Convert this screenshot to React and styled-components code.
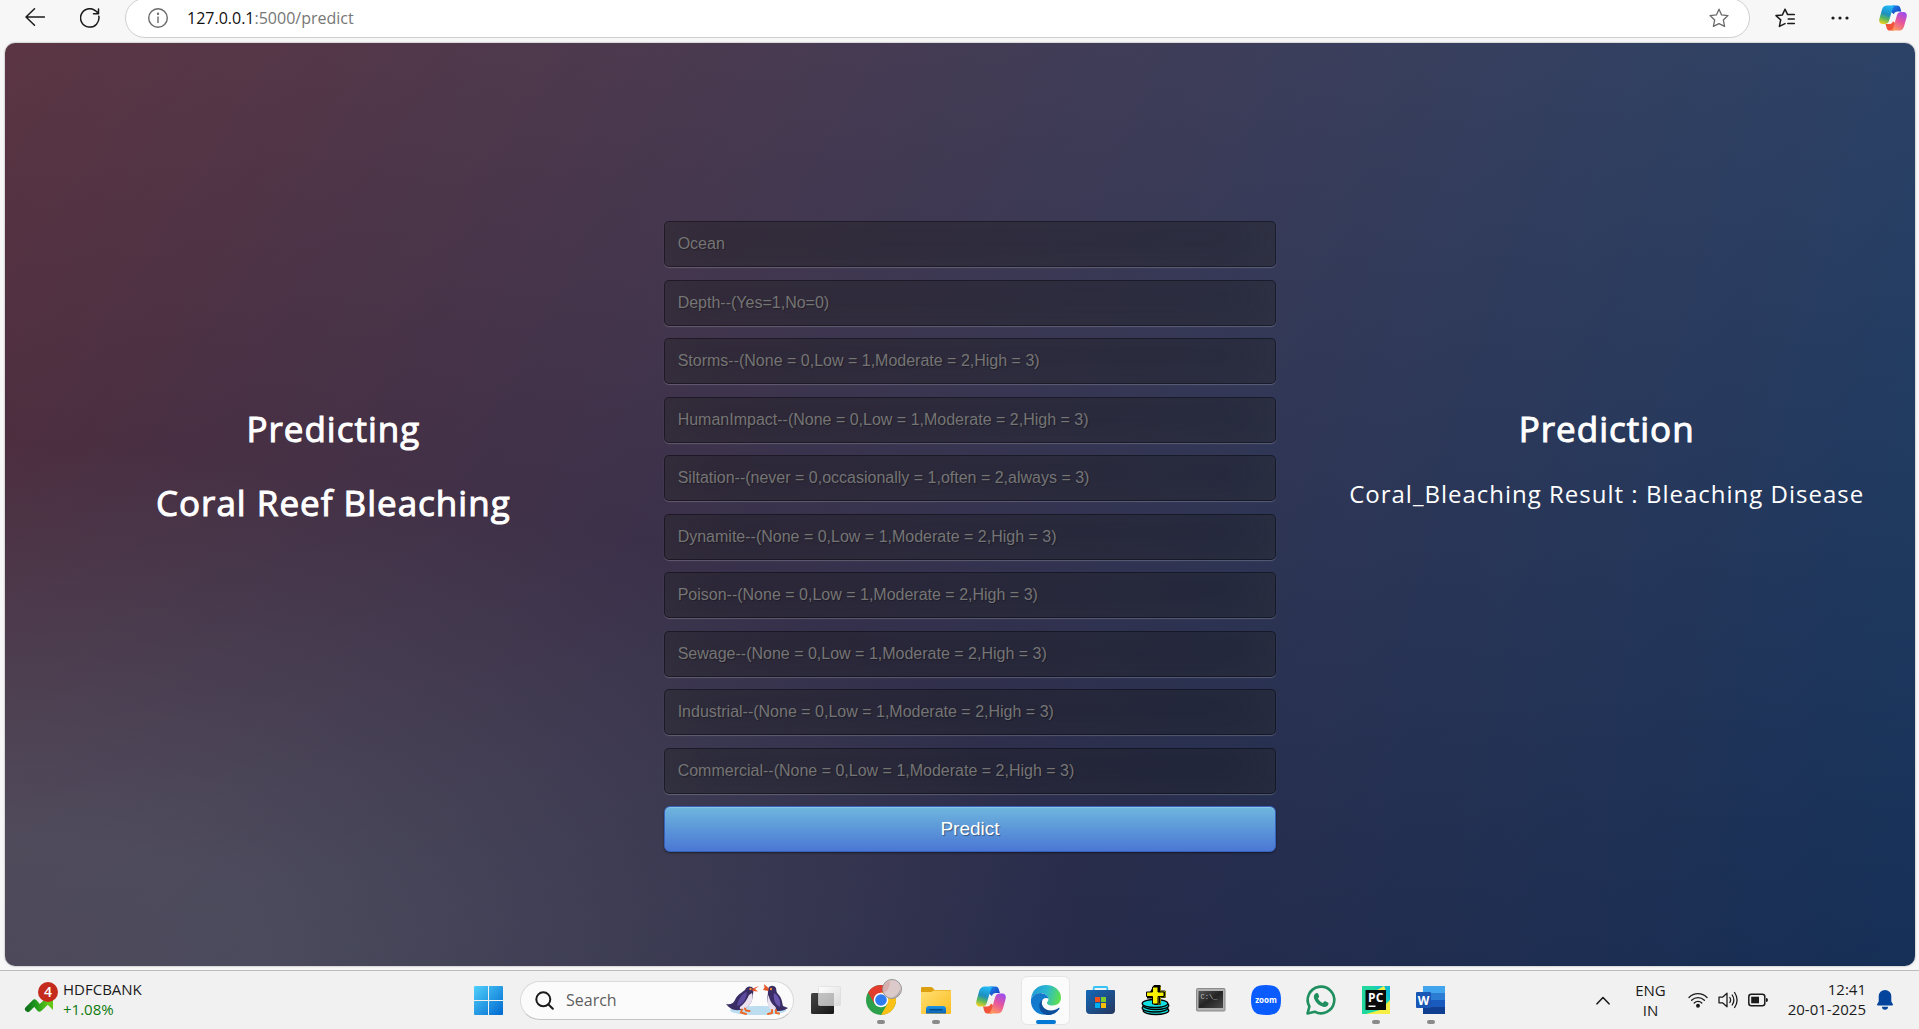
import React from "react";
import styled, { createGlobalStyle } from "styled-components";

const GlobalStyle = createGlobalStyle`
  *, *::before, *::after { box-sizing: border-box; }
  body { margin: 0; background: #f7f7f7; overflow: hidden; }
  button, input { font: inherit; color: inherit; margin: 0; }
  h1, p { margin: 0; }
`;

const ui = `"Open Sans", "Noto Sans", sans-serif`;
const arial = `"Liberation Sans", Arial, sans-serif`;

/* ---------- window ---------- */
const Window = styled.div`
  display: flex;
  flex-direction: column;
  min-height: 100vh;
  background: #f7f7f7;
  font-family: ${ui};
`;

/* ---------- browser toolbar ---------- */
const Toolbar = styled.header`
  display: flex;
  align-items: center;
  height: 36px;
  margin-bottom: 7px;
  padding: 0 12px 0 25px;
`;

const IconButton = styled.button`
  display: flex;
  align-items: center;
  justify-content: center;
  flex: none;
  width: ${(p) => p.$w || 20}px;
  height: 28px;
  margin-right: ${(p) => p.$gap || 0}px;
  padding: 0;
  border: 0;
  background: none;
  color: ${(p) => p.$color || "#1b1b1b"};
`;

const AddressBar = styled.div`
  display: flex;
  align-items: center;
  flex: 1;
  height: 40px;
  margin-right: 25px;
  padding: 0 20px 0 22px;
  border: 1px solid #cfcfcf;
  border-radius: 20px;
  background: #fff;
`;

const Address = styled.div`
  flex: 1;
  font-size: 16px;
  line-height: 24px;
  color: #767676;
  white-space: nowrap;
`;

const Host = styled.span`
  color: #111;
`;

/* ---------- web page ---------- */
const Page = styled.main`
  flex: 1;
  display: grid;
  grid-template-columns: repeat(3, minmax(0, 1fr));
  margin: 0 4px 0 5px;
  padding: 178px 0 114px;
  border-radius: 10px;
  box-shadow: 0 0 2px rgba(0, 0, 0, 0.45);
  background:
    radial-gradient(ellipse at 0% 100%, rgba(104, 128, 138, 0.4) 10%, rgba(138, 114, 76, 0) 40%),
    linear-gradient(to bottom, rgba(57, 173, 219, 0.25) 0%, rgba(42, 60, 87, 0.4) 100%),
    linear-gradient(135deg, #670d10 0%, #092756 100%);
`;

const SideColumn = styled.section`
  display: flex;
  flex-direction: column;
  align-items: center;
  gap: 28px;
  padding: 185px 0 0 20px;
  color: #fff;
  letter-spacing: 1px;
  text-align: center;
`;

const Title = styled.h1`
  font-size: 35px;
  font-weight: 400;
  line-height: 46px;
  -webkit-text-stroke: 1px #fff;
`;

const Result = styled.p`
  font-size: 24px;
  line-height: 28px;
  white-space: nowrap;
`;

const Form = styled.form`
  display: flex;
  flex-direction: column;
  justify-content: space-between;
  padding: 0 2px 0 22px;
  font-family: ${arial};
`;

const Field = styled.input`
  width: 100%;
  height: 46px;
  padding: 0 13px;
  border: 1px solid rgba(0, 0, 0, 0.3);
  border-radius: 5px;
  outline: none;
  background: rgba(0, 0, 0, 0.3);
  box-shadow: inset 0 -6px 56px rgba(100, 100, 100, 0.2), 0 1px 1px rgba(255, 255, 255, 0.2);
  color: #fff;
  font-size: 16px;
  text-shadow: 1px 1px 1px rgba(0, 0, 0, 0.3);
  &::placeholder { color: #757575; opacity: 1; }
`;

const Submit = styled.button`
  width: 100%;
  height: 46px;
  border: 1px solid #3762bc;
  border-radius: 6px;
  background: linear-gradient(to bottom, #6eb6de, #4a77d4);
  box-shadow: inset 0 1px 0 rgba(255, 255, 255, 0.2), 0 1px 2px rgba(0, 0, 0, 0.5);
  color: #fff;
  font-size: 19px;
  text-shadow: 1px 1px 1px rgba(0, 0, 0, 0.4);
`;

/* ---------- taskbar ---------- */
const Taskbar = styled.footer`
  display: grid;
  grid-template-columns: 1fr auto 1fr;
  align-items: center;
  height: 59px;
  margin-top: 4px;
  border-top: 1px solid #bcbcbc;
  background: #f1f1f1;
`;

const Widget = styled.button`
  display: flex;
  align-items: center;
  justify-self: start;
  gap: 4px;
  padding: 0 0 2px;
  margin-left: 23px;
  border: 0;
  background: none;
  text-align: left;
`;

const Lines = styled.span`
  display: flex;
  flex-direction: column;
  font-size: 15px;
  line-height: 20px;
  color: #1b1b1b;
  text-align: ${(p) => p.$align || "left"};
  white-space: nowrap;
`;

const Gain = styled.span`
  color: #0f7b0f;
`;

const Apps = styled.nav`
  display: flex;
  align-items: center;
`;

const AppButton = styled.button`
  position: relative;
  display: flex;
  align-items: center;
  justify-content: center;
  width: 49px;
  height: 49px;
  margin: 0 3px;
  padding: 0;
  border: 1px solid ${(p) => (p.$active ? "#e6e6e6" : "transparent")};
  border-radius: 6px;
  background: ${(p) => (p.$active ? "#fbfbfb" : "none")};
  svg { overflow: visible; }
  &::after {
    content: "";
    position: absolute;
    bottom: 0;
    left: 50%;
    width: ${(p) => (p.$active ? 20 : p.$open ? 8 : 0)}px;
    height: 4px;
    border-radius: 2px;
    background: ${(p) => (p.$active ? "#0078d4" : "#8a8a8a")};
    transform: translateX(-50%);
  }
`;

const SearchBox = styled.label`
  display: flex;
  align-items: center;
  width: 274px;
  height: 39px;
  margin: 0 4px;
  padding: 0 5px 0 14px;
  border: 1px solid #dadada;
  border-bottom-color: #c4c4c4;
  border-radius: 20px;
  background: #fbfbfb;
  color: #1b1b1b;
`;

const SearchInput = styled.input`
  flex: 1;
  min-width: 0;
  padding: 0 0 0 12px;
  border: 0;
  outline: none;
  background: none;
  font-size: 16px;
  &::placeholder { color: #5f5f5f; opacity: 1; }
`;

const Tray = styled.div`
  display: flex;
  align-items: center;
  justify-self: end;
  padding-right: 26px;
  color: #1b1b1b;
`;

const TrayButton = styled.button`
  display: flex;
  align-items: center;
  padding: 0 0 ${(p) => (p.$raised ? 2 : 0)}px;
  margin-right: ${(p) => p.$gap || 0}px;
  border: 0;
  background: none;
`;

/* ---------- drawings ---------- */
const line = { fill: "none", stroke: "currentColor", strokeLinecap: "round", strokeLinejoin: "round" };

const BackIcon = () => (
  <svg width="20" height="20" viewBox="0 0 20 20" {...line} strokeWidth="1.5">
    <path d="M19.5 9H1M9.5 .8 1 9 9.5 17.200" />
  </svg>
);
const ReloadIcon = () => (
  <svg width="20" height="20" viewBox="0 0 20 20" {...line} strokeWidth="1.5">
    <path d="M18.8 8.2A9.2 9.2 0 1 1 15.6 2.8L18.4 5.4M18.5 1v4.8h-5" />
  </svg>
);
const InfoIcon = () => (
  <svg width="20" height="20" viewBox="0 0 20 20" {...line} strokeWidth="1.4">
    <circle cx="10" cy="10" r="9.3" />
    <path d="M10 9v5.5" />
    <circle cx="10" cy="5.8" r=".5" fill="currentColor" />
  </svg>
);
const starPath = "M10 1.2 12.6 6.9 19 7.6 14.3 11.9 15.6 18.4 10 15.6 4.4 18.4 5.7 11.9 1 7.6 7.4 6.9Z";
const StarIcon = () => (
  <svg width="20" height="20" viewBox="0 0 20 20" {...line} strokeWidth="1.3">
    <path d={starPath} />
  </svg>
);
const FavoritesIcon = () => (
  <svg width="20" height="20" viewBox="0 0 20 20" {...line} strokeWidth="1.5">
    <path d="M19.3 6.6H12.6L10 1.2 7.4 6.9 1 7.6 5.7 11.9 4.4 18.4 10 15.6M13.2 11h6.1M12.8 15.4h6.5" />
  </svg>
);
const DotsIcon = () => (
  <svg width="18" height="4" viewBox="0 0 18 4" fill="currentColor">
    <circle cx="2" cy="2" r="1.6" /><circle cx="9" cy="2" r="1.6" /><circle cx="16" cy="2" r="1.6" />
  </svg>
);

const CopilotIcon = ({ id, size }) => (
  <svg width={size} height={size} viewBox="0 0 30 30">
    <defs>
      <linearGradient id={id + "a"} x1="0.5" y1="0" x2="0.2" y2="1">
        <stop offset="0" stopColor="#22b8f5" /><stop offset=".45" stopColor="#1e8fc0" />
        <stop offset=".7" stopColor="#5bb75a" /><stop offset="1" stopColor="#f5d21f" />
      </linearGradient>
      <linearGradient id={id + "b"} x1="0.8" y1="0" x2="0.3" y2="1">
        <stop offset="0" stopColor="#9a4df0" /><stop offset=".5" stopColor="#e8559c" /><stop offset="1" stopColor="#ff9a5c" />
      </linearGradient>
      <linearGradient id={id + "c"} x1="0" y1="0" x2="1" y2="1">
        <stop offset="0" stopColor="#1e8cf0" /><stop offset="1" stopColor="#1534b8" />
      </linearGradient>
    </defs>
    <path d="M14 1.500h5.500c2 0 2.800 1 3.400 3l1 3.500h-4c-2.200 0-3.300 1-4 3l-3.500-3z" fill={`url(#${id}c)`} />
    <path d="M16 28.500h-4.500c-2 0-2.800-1-3.400-3l-1.100-4h4c2.200 0 3.300-1 4-3l3.500 3z" fill="#f2543a" />
    <path d="M9 1.500h9c-2.200.5-3 2.200-3.700 4.500l-3.500 12c-.8 2.500-2.200 3.500-4.500 3.500H4C.6 21.500-.4 19 .5 15.500l2.700-9.500C4 3 6 1.500 9 1.500z" fill={`url(#${id}a)`} />
    <path d="M21 28.500h-9c2.200-.5 3-2.200 3.700-4.500l3.500-12c.8-2.500 2.200-3.500 4.500-3.500H26c3.400 0 4.400 2.500 3.500 6l-2.700 9.500c-.8 3-2.800 4.500-5.800 4.500z" fill={`url(#${id}b)`} />
  </svg>
);

const StocksIcon = () => (
  <svg width="36" height="36" viewBox="0 0 36 36">
    <defs>
      <linearGradient id="stk" gradientUnits="userSpaceOnUse" x1="2" y1="0" x2="30" y2="0"><stop offset="0" stopColor="#0e6a1c" /><stop offset=".4" stopColor="#1f9a1c" /><stop offset="1" stopColor="#7bd61a" /></linearGradient>
    </defs>
    <path d="M5 28 11.500 21.500 16.500 27.500 26 18.500" fill="none" stroke="url(#stk)" strokeWidth="6" strokeLinejoin="round" strokeLinecap="round" />
    <path d="M19 15h11v14l-5-5z" fill="#63c718" />
    <circle cx="25" cy="11" r="10" fill="#c42b1c" />
    <text x="25" y="16" textAnchor="middle" fontFamily="Open Sans" fontSize="14" fontWeight="600" fill="#fff">4</text>
  </svg>
);

const WindowsIcon = () => (
  <svg width="29" height="29" viewBox="0 0 29 29">
    <defs>
      <linearGradient id="win" gradientUnits="userSpaceOnUse" x1="0" y1="0" x2="29" y2="29">
        <stop offset="0" stopColor="#4fd0fb" /><stop offset="1" stopColor="#0068cf" />
      </linearGradient>
    </defs>
    <g fill="url(#win)">
      <path d="M1 0H14V14H0V1Q0 0 1 0z" /><path d="M15 0h13q1 0 1 1v13H15z" />
      <path d="M0 15h14v14H1q-1 0-1-1z" /><path d="M15 15h14v13q0 1-1 1H15z" />
    </g>
  </svg>
);

const SearchIcon = () => (
  <svg width="19" height="19" viewBox="0 0 19 19" {...line} strokeWidth="2">
    <circle cx="8.300" cy="8.300" r="7" /><path d="m13.500 13.500 4.300 4.300" />
  </svg>
);

const PenguinsIcon = () => (
  <svg width="62" height="32" viewBox="0 0 62 32">
    <ellipse cx="32" cy="26.500" rx="28" ry="4.500" fill="#bcdcf0" />
    <path d="M0 20c4 1 7 0 9-4 2-5 6-7 10-10 1-3 4-4.500 7-3 2 2 1.500 4 1 7-.5 8-3 12-9 15C9 28 4 25 0 20z" fill="#3a2d66" />
    <path d="M26 9c2 6-1 13-8 16-3 1-5 0-4-2 4-3 7-7 9-12z" fill="#e9e0f0" />
    <path d="M20 8c-5 3-8 8-9 14 5-1 9-6 10-13z" fill="#5c4a9e" />
    <path d="M26.500 4.500 33 2 29 5 32 7.500 26.500 7z" fill="#e5572a" />
    <circle cx="24.500" cy="5" r="1.200" fill="#f08a3a" />
    <path d="M16 25.500l-1 3 5 1.500M19 24.500l1 2 3.500 .5" fill="none" stroke="#ea6a2b" strokeWidth="2" strokeLinecap="round" />
    <path d="M42 5c1-4 6-4.500 8-1 .5 2 0 4 2 6 4 4 4 8 5 12l5 2c-3 2.500-7 3-12 3-7-1-9-8-8.500-14 .5-3 .5-5 .5-8z" fill="#3a2d66" />
    <path d="M42.500 11c-2 6-1 13 4 16 3 0 4-2 3-4-4-3-6-7-7-12z" fill="#e9e0f0" />
    <path d="M48 9c5 3 7 8 6 14-5-2-7-8-6-14z" fill="#6a56ac" />
    <path d="M42.500 4 38 0l.5 3.500L37 6l5.500 1z" fill="#e5572a" />
    <circle cx="45" cy="5" r="1.200" fill="#f08a3a" />
    <path d="M46 26v3l-4 1M50 26v3l3 .5" fill="none" stroke="#ea6a2b" strokeWidth="2" strokeLinecap="round" />
  </svg>
);

const TaskViewIcon = () => (
  <svg width="30" height="28" viewBox="0 0 30 28">
    <defs>
      <linearGradient id="tv1" x1="0" y1="0" x2="1" y2="1"><stop offset="0" stopColor="#454545" /><stop offset="1" stopColor="#171717" /></linearGradient>
      <linearGradient id="tv2" x1="0" y1="0" x2="1" y2="1"><stop offset="0" stopColor="#fff" stopOpacity=".95" /><stop offset="1" stopColor="#d8d8d8" stopOpacity=".85" /></linearGradient>
    </defs>
    <rect x="0" y="7" width="23" height="21" rx="1.500" fill="url(#tv1)" />
    <rect x="7.500" y=".5" width="22" height="19" rx="1" fill="url(#tv2)" stroke="#d8d8d8" strokeWidth=".6" />
    <path d="M7.500 7H23v12.500H7.500z" fill="#a8a8a8" opacity=".6" />
  </svg>
);

const ChromeIcon = () => (
  <svg width="30" height="30" viewBox="0 0 30 30">
    <circle cx="15" cy="15" r="15" fill="#2da04b" />
    <path d="M15 15 2 7.500A15 15 0 0 1 28 7.500z" fill="#e33b2e" />
    <path d="M15 7.500h13A15 15 0 0 1 15 30l6.500-11.200z" fill="#fbc116" />
    <path d="M15 15 8.500 18.700 2 7.500z" fill="#e33b2e" />
    <circle cx="15" cy="15" r="7.300" fill="#fff" /><circle cx="15" cy="15" r="5.800" fill="#2f7cf0" />
    <circle cx="26" cy="4" r="9.500" fill="#dccaca" stroke="#8c8c8c" strokeWidth=".9" />
    <path d="M18 8c4-3 6-6 6-12l-3 1c-4 3-5 7-3 11z" fill="#d3a3a3" opacity=".7" />
    <path d="M26 13c4-2 7-5 8-9 1 5-3 10-8 9z" fill="#a9a2a2" opacity=".8" />
  </svg>
);

const FolderIcon = () => (
  <svg width="30" height="28" viewBox="0 0 30 28">
    <defs>
      <linearGradient id="fld" x1="0" y1="0" x2="1" y2="1"><stop offset="0" stopColor="#ffdf73" /><stop offset="1" stopColor="#fbbd20" /></linearGradient>
      <linearGradient id="flb" x1="0" y1="0" x2="0" y2="1"><stop offset="0" stopColor="#1c95e6" /><stop offset="1" stopColor="#0b63b5" /></linearGradient>
    </defs>
    <path d="M0 2Q0 1 1.500 1H10q1.500 0 2.500 1.500L13.500 4H28q2 0 2 1v4H0z" fill="#dc9f10" />
    <path d="M0 7q0-1 1-1h9l3-1.500h16q1 0 1 1V27q0 1-1 1H1q-1 0-1-1z" fill="url(#fld)" />
    <path d="M5 27.500v-4.500q0-3 3-3h14q3 0 3 3v4.500z" fill="url(#flb)" />
    <path d="M9 23.800h12" stroke="#064a8c" strokeWidth="1.400" strokeLinecap="round" />
  </svg>
);

const EdgeIcon = () => (
  <svg width="30" height="30" viewBox="0 0 30 30">
    <defs>
      <linearGradient id="eg1" x1="0" y1=".3" x2="1" y2=".5"><stop offset="0" stopColor="#1f9ad6" /><stop offset=".5" stopColor="#2bb8d0" /><stop offset="1" stopColor="#5fe04d" /></linearGradient>
      <linearGradient id="eg2" x1=".2" y1="0" x2=".7" y2="1"><stop offset="0" stopColor="#1677c8" /><stop offset="1" stopColor="#0f7fd6" /></linearGradient>
    </defs>
    <path d="M0 14C1 5 7 0 15 0c9 0 15 6 15 12.500 0 5-3.500 8-8.500 8-4 0-6-1.500-5.500-3 .5-.8 1.500-1.800 1.500-3.500C17 10 13 7.500 9 8 5 8.500 1.500 11 0 14z" fill="url(#eg1)" />
    <path d="M0 14C2 10 5.500 8 9 8c5 0 8.500 3 8.500 6-1.500-2-5.500-1-7 2-2 4 0 9 4 13.800C6 30-1 24 0 14z" fill="url(#eg2)" />
    <path d="M12 14c-3.500 5 1 11.500 8 11.500 3 0 5.500-1 7.500-2.500 1-.5 1.300.2.800 1C25.500 28 21 30.500 15.500 30 8 28 5.500 18.500 12 14z" fill="#0d4f9c" />
  </svg>
);

const StoreIcon = () => (
  <svg width="29" height="30" viewBox="0 0 29 30">
    <defs><linearGradient id="sto" x1="0" y1="0" x2="1" y2="1"><stop offset="0" stopColor="#1468b8" /><stop offset="1" stopColor="#26365e" /></linearGradient></defs>
    <path d="M7.700 7V3Q7.700 2 8.700 2H20.300q1 0 1 1V7" fill="none" stroke="#35c3f3" strokeWidth="1.800" />
    <path d="M0 6q0-1 1-1h27q1 0 1 1v19q0 4-4 4H4q-4 0-4-4z" fill="url(#sto)" />
    <path d="M9 12h5v5H9z" fill="#f1511b" /><path d="M15 12h5v5h-5z" fill="#80cc28" />
    <path d="M9 18h5v5H9z" fill="#00adef" /><path d="M15 18h5v5h-5z" fill="#fbbc09" />
  </svg>
);

const DiscIcon = () => (
  <svg width="30" height="30" viewBox="0 0 30 30">
    {[25.500, 23, 20.500, 18.500].map((y, i) => (
      <ellipse key={y} cx={i % 2 ? 14 : 15} cy={y} rx="12.800" ry="4" fill="#12e0e0" stroke="#000" strokeWidth="1.300" />
    ))}
    <path d="M13 0h6l1 1v4.500h4l1 1V12l-1 1h-4v6l-1 1h-6v-6.500H6V12z" fill="#000" />
    <path d="M19.500 1.500v5h5V12h-5v6.500l-2 1V11.500h6" fill="none" stroke="#8f8a00" strokeWidth="1" />
    <path d="M11.500 2H17v5h6v4.500h-6V19h-5.500v-7.500H5.500V7h6z" fill="#f8f400" stroke="#000" strokeWidth="1" />
  </svg>
);

const TerminalIcon = () => (
  <svg width="30" height="24" viewBox="0 0 30 24">
    <defs><linearGradient id="trm" x1="0" y1="0" x2="1" y2="1"><stop offset="0" stopColor="#565656" /><stop offset=".5" stopColor="#242424" /><stop offset="1" stopColor="#4a4a4a" /></linearGradient></defs>
    <rect x=".5" y=".5" width="28.500" height="22.500" rx="1" fill="#b0b0b0" stroke="#8b8b8b" />
    <rect x="2.500" y="3" width="24.500" height="17" fill="url(#trm)" />
    <text x="4.500" y="10.500" fontFamily="Liberation Mono" fontSize="7" fill="#bdbdbd">C:\_</text>
  </svg>
);

const ZoomIcon = () => (
  <svg width="30" height="30" viewBox="0 0 30 30">
    <path d="M15 0C26 0 30 4 30 15S26 30 15 30 0 26 0 15 4 0 15 0z" fill="#0b5cff" />
    <text x="15" y="17.500" textAnchor="middle" fontFamily="Open Sans" fontSize="8" fontWeight="700" fill="#fff">zoom</text>
  </svg>
);

const WhatsAppIcon = () => (
  <svg width="30" height="30" viewBox="0 0 30 30">
    <path d="M1.500 28.500 3.400 21.500A13.300 13.300 0 1 1 8.700 26.700z" fill="none" stroke="#1f8f5f" strokeWidth="2.600" strokeLinejoin="round" />
    <path d="M10.500 8c.8-.3 1.400 0 1.700.8l.9 2.200c.2.600 0 1-.4 1.500l-.8 1c1.200 2.200 2.800 3.500 5 4.500l1.200-1.400c.4-.4.800-.5 1.300-.3l2.500 1.200c.6.300.8.700.6 1.400-.6 2.400-2.600 3.300-4.700 3C12.500 20.800 8.500 16.500 7.800 12c-.1-1.800 1.200-3.500 2.700-4z" fill="#1f8f5f" />
  </svg>
);

const PyCharmIcon = () => (
  <svg width="28" height="28" viewBox="0 0 28 28">
    <path d="M0 0h28v28H0z" fill="#21d7a0" />
    <path d="M12 0h16v18z" fill="#16c8c8" /><path d="M28 14V28H4l14-4z" fill="#f4ee45" />
    <path d="M22 0 15 4h9l2 4z" fill="#f4ee45" /><path d="M23 0h5v14l-4-6z" fill="#10b9d3" />
    <path d="M3.500 4H24v20H3.500z" fill="#0a0a0a" />
    <text x="13.700" y="16" textAnchor="middle" fontFamily="Open Sans" fontSize="12" fontWeight="700" fill="#fff">PC</text>
    <path d="M6.500 19.500h7v1.500h-7z" fill="#fff" />
  </svg>
);

const WordIcon = () => (
  <svg width="30" height="28" viewBox="0 0 30 28">
    <path d="M7 0h22v7H7z" fill="#41a5ee" /><path d="M7 7h22v7H7z" fill="#2b7cd3" />
    <path d="M7 14h22v7H7z" fill="#185abd" /><path d="M7 21h22v7H7z" fill="#103f91" />
    <rect x="0" y="6" width="15" height="16" rx="1" fill="#1a57b5" />
    <text x="7.500" y="18.500" textAnchor="middle" fontFamily="Open Sans" fontSize="12" fontWeight="700" fill="#fff">W</text>
  </svg>
);

const ChevronIcon = () => (
  <svg width="14" height="9" viewBox="0 0 14 9" {...line} strokeWidth="1.600"><path d="M1 7.800 7 1.500l6 6.300" /></svg>
);
const WifiIcon = () => (
  <svg width="20" height="16" viewBox="0 0 20 16" {...line} strokeWidth="1.300">
    <path d="M1 5.500a12.500 12.500 0 0 1 18 0M3.600 8.300a9 9 0 0 1 12.800 0M6.200 11a5.400 5.400 0 0 1 7.600 0" />
    <circle cx="10" cy="13.700" r="1.300" fill="currentColor" />
  </svg>
);
const SpeakerIcon = () => (
  <svg width="20" height="18" viewBox="0 0 20 18" {...line} strokeWidth="1.300">
    <path d="M1 6.200h3.500L9 2.200v13.600L4.500 11.800H1zM11.800 6.500q1.600 2.500 0 5M14.200 4q3.300 5 0 10M16.600 1.500q5 7.500 0 15" />
  </svg>
);
const BatteryIcon = () => (
  <svg width="20" height="14" viewBox="0 0 20 14">
    <rect x=".8" y="1.300" width="16" height="11.400" rx="2.500" {...line} strokeWidth="1.500" />
    <path d="M3.200 3.700H11v6.600H3.200z" fill="currentColor" /><path d="M18 5q2 0 2 2t-2 2z" fill="currentColor" />
  </svg>
);
const BellIcon = () => (
  <svg width="16" height="20" viewBox="0 0 16 20" fill="#04449c">
    <path d="M8 0a6.300 6.300 0 0 1 6.300 6.300v5.200L16 14.500q.3 1-1 1H1q-1.300 0-1-1l1.700-3V6.300A6.300 6.300 0 0 1 8 0zM5 16.800h6a3 3 0 0 1-6 0z" />
  </svg>
);

const impact = "(None = 0,Low = 1,Moderate = 2,High = 3)";
const fields = [
  ["Ocean", "Ocean"],
  ["Depth", "Depth--(Yes=1,No=0)"],
  ["Storms", `Storms--${impact}`],
  ["HumanImpact", `HumanImpact--${impact}`],
  ["Siltation", "Siltation--(never = 0,occasionally = 1,often = 2,always = 3)"],
  ["Dynamite", `Dynamite--${impact}`],
  ["Poison", `Poison--${impact}`],
  ["Sewage", `Sewage--${impact}`],
  ["Industrial", `Industrial--${impact}`],
  ["Commercial", `Commercial--${impact}`],
];

const apps = [
  { name: "Task View", icon: <TaskViewIcon /> },
  { name: "Chrome", icon: <ChromeIcon />, open: true },
  { name: "File Explorer", icon: <FolderIcon />, open: true },
  { name: "Copilot", icon: <CopilotIcon id="cpb" size={30} /> },
  { name: "Edge", icon: <EdgeIcon />, active: true },
  { name: "Store", icon: <StoreIcon /> },
  { name: "Disc tool", icon: <DiscIcon /> },
  { name: "Command Prompt", icon: <TerminalIcon /> },
  { name: "Zoom", icon: <ZoomIcon /> },
  { name: "WhatsApp", icon: <WhatsAppIcon /> },
  { name: "PyCharm", icon: <PyCharmIcon />, open: true },
  { name: "Word", icon: <WordIcon />, open: true },
];

export default function App() {
  return (
    <Window>
      <GlobalStyle />
      <Toolbar>
        <IconButton aria-label="Back" $gap={35}><BackIcon /></IconButton>
        <IconButton aria-label="Refresh" $gap={25}><ReloadIcon /></IconButton>
        <AddressBar>
          <IconButton aria-label="Site information" $color="#6a6a6a" $gap={19}><InfoIcon /></IconButton>
          <Address><Host>127.0.0.1</Host>:5000/predict</Address>
          <IconButton aria-label="Add to favorites" $color="#6a6a6a"><StarIcon /></IconButton>
        </AddressBar>
        <IconButton aria-label="Favorites" $gap={36}><FavoritesIcon /></IconButton>
        <IconButton aria-label="Settings and more" $w={18} $gap={30}><DotsIcon /></IconButton>
        <IconButton aria-label="Copilot" $w={28}><CopilotIcon id="cpa" size={28} /></IconButton>
      </Toolbar>

      <Page>
        <SideColumn>
          <Title>Predicting</Title>
          <Title>Coral Reef Bleaching</Title>
        </SideColumn>
        <Form onSubmit={(e) => e.preventDefault()}>
          {fields.map(([name, hint]) => (
            <Field key={name} type="text" name={name} aria-label={name} placeholder={hint} />
          ))}
          <Submit type="submit">Predict</Submit>
        </Form>
        <SideColumn>
          <Title>Prediction</Title>
          <Result>Coral_Bleaching Result : Bleaching Disease</Result>
        </SideColumn>
      </Page>

      <Taskbar>
        <Widget>
          <StocksIcon />
          <Lines><span>HDFCBANK</span><Gain>+1.08%</Gain></Lines>
        </Widget>
        <Apps>
          <AppButton aria-label="Start"><WindowsIcon /></AppButton>
          <SearchBox>
            <SearchIcon />
            <SearchInput type="text" placeholder="Search" aria-label="Search" />
            <PenguinsIcon />
          </SearchBox>
          {apps.map((a) => (
            <AppButton key={a.name} aria-label={a.name} $open={a.open} $active={a.active}>{a.icon}</AppButton>
          ))}
        </Apps>
        <Tray>
          <TrayButton aria-label="Show hidden icons" $gap={25}><ChevronIcon /></TrayButton>
          <TrayButton $gap={22}><Lines $align="center"><span>ENG</span><span>IN</span></Lines></TrayButton>
          <TrayButton aria-label="Network" $gap={10}><WifiIcon /></TrayButton>
          <TrayButton aria-label="Volume" $gap={10}><SpeakerIcon /></TrayButton>
          <TrayButton aria-label="Battery" $gap={20}><BatteryIcon /></TrayButton>
          <TrayButton $gap={11} $raised><Lines $align="right"><span>12:41</span><span>20-01-2025</span></Lines></TrayButton>
          <TrayButton aria-label="Notifications"><BellIcon /></TrayButton>
        </Tray>
      </Taskbar>
    </Window>
  );
}
